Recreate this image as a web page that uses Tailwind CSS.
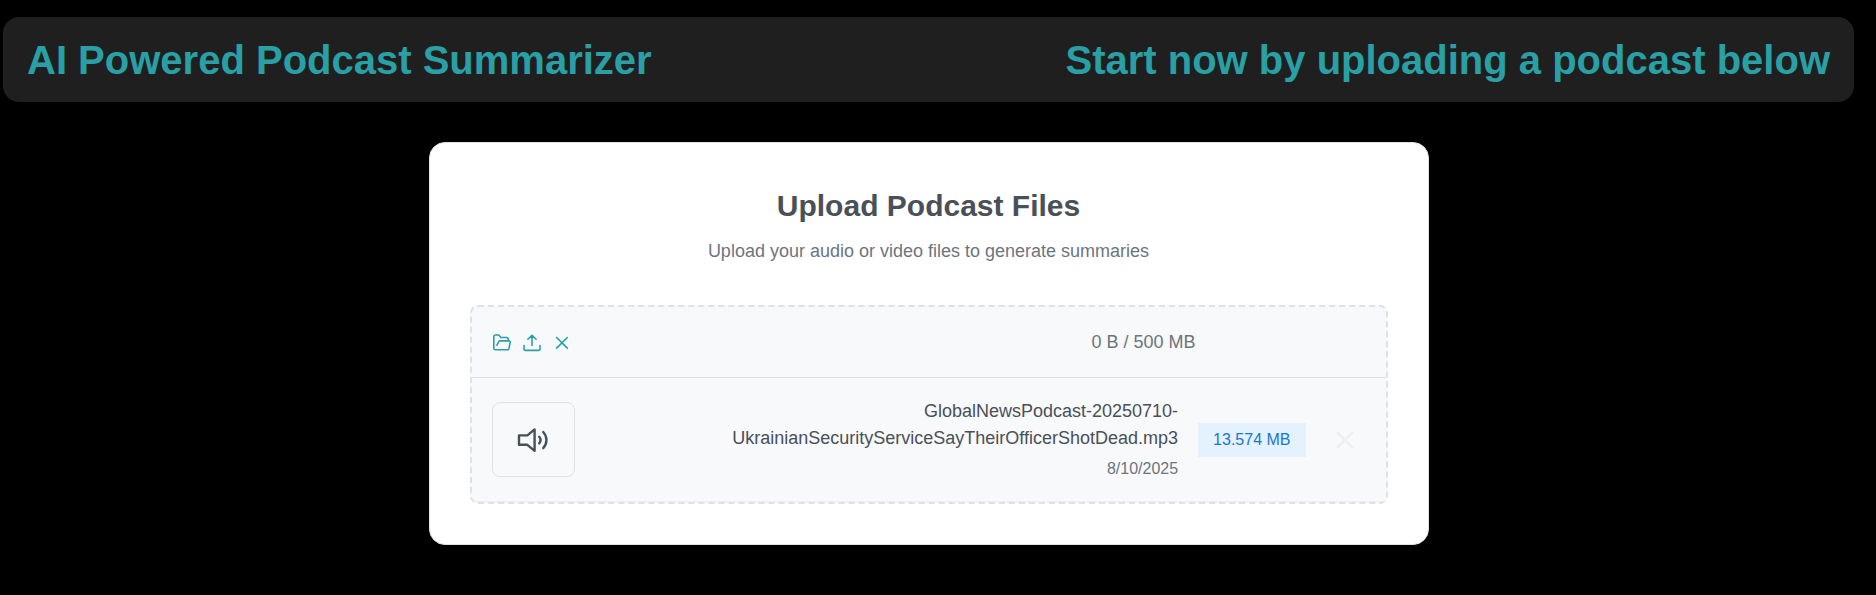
<!DOCTYPE html>
<html lang="en">
<head>
<meta charset="utf-8">
<meta name="viewport" content="width=device-width, initial-scale=1">
<title>AI Powered Podcast Summarizer</title>
<script src="https://cdn.jsdelivr.net/npm/@tailwindcss/browser@4"></script>
</head>
<body class="min-h-screen bg-black pt-[17px] pr-[22px] pb-8 pl-[3px] font-['Liberation_Sans',Arial,sans-serif] text-lg leading-[27px] text-[#495057]">
<header class="flex items-center justify-between rounded-2xl bg-[#1f1f1f] px-6 pt-[21px] pb-[19px] text-[40px] leading-[45px] font-bold text-[#28a0a5]">
  <h1>AI Powered Podcast Summarizer</h1>
  <p>Start now by uploading a podcast below</p>
</header>
<main class="mx-auto mt-10 max-w-[1000px] rounded-2xl border border-[#dee2e6] bg-white p-10">
  <div class="text-center">
    <h2 class="pt-1 text-[30px] leading-[37px] font-bold">Upload Podcast Files</h2>
    <p class="mt-[14px] text-[#6c757d]">Upload your audio or video files to generate summaries</p>
  </div>
  <section class="mt-10 rounded-lg border-2 border-dashed border-[#dee2e6] bg-[#f8f9fb]" aria-label="Files">
    <div class="flex items-center justify-between border-b border-[#dee2e6] pt-[22px] pb-[21px] pl-[21px] pr-[190px]">
      <div class="flex items-center gap-3 text-[#28a0a5]">
        <button type="button" aria-label="Choose files">
          <svg class="size-[18px]" viewBox="0 0 18 18" fill="none" stroke="currentColor" stroke-width="1.6" stroke-linejoin="round" stroke-linecap="round"><path d="M2.4 15.8h12.3a1.2 1.2 0 0 0 1.2-.9l1.3-6.6a1.2 1.2 0 0 0-1.2-1.4H6.9a1.2 1.2 0 0 0-1.1.7l-1.9 3.6M2.4 15.8A1.6 1.6 0 0 1 .8 14.2V2.6A1.6 1.6 0 0 1 2.4 1h3.3l2.3 2.5h5.7a1.5 1.5 0 0 1 1.5 1.5v1.8"/></svg>
        </button>
        <button type="button" aria-label="Upload">
          <svg class="size-[18px]" viewBox="0 0 18 18" fill="none" stroke="currentColor" stroke-width="1.6" stroke-linejoin="round" stroke-linecap="round"><path d="M9 11.4V1.4M4.9 5.2L9 1.2l4.1 4M1 11.6v3.3a1.5 1.5 0 0 0 1.5 1.5h13a1.5 1.5 0 0 0 1.5-1.5v-3.3"/></svg>
        </button>
        <button type="button" aria-label="Cancel">
          <svg class="size-[18px]" viewBox="0 0 18 18" fill="none" stroke="currentColor" stroke-width="1.6" stroke-linecap="round"><path d="M3.7 3.5l10.6 10.6M14.3 3.5L3.7 14.1"/></svg>
        </button>
      </div>
      <span class="text-[#6c757d]">0 B / 500 MB</span>
    </div>
    <div class="flex items-center border-b border-[#eceef1] py-5 pr-[31px] pl-5">
      <div class="flex h-[75px] w-[83px] shrink-0 items-center justify-center rounded-lg border border-[#dee2e6]">
        <svg class="size-8" viewBox="0 0 32 32" fill="none" stroke="currentColor" stroke-width="2.4" stroke-linejoin="round" stroke-linecap="round" role="img" aria-label="Audio file"><path d="M17.6 5.4v21.4l-7.2-6H2V11.4h8.4zM22.2 12.8c1.7 2 1.7 4.6 0 6.6M26.2 8c4.3 4.4 4.3 11.8 0 16.2"/></svg>
      </div>
      <div class="ml-auto w-[480px] text-right">
        <p class="break-words">GlobalNewsPodcast-20250710-UkrainianSecurityServiceSayTheirOfficerShotDead.mp3</p>
        <p class="mt-[5px] text-base leading-6 text-[#6c757d]">8/10/2025</p>
      </div>
      <span class="ml-5 bg-[#e3f2fd] px-[15px] py-[5px] text-base leading-6 text-[#1976d2]">13.574 MB</span>
      <button type="button" class="ml-[29px] text-[#eeeeee]" aria-label="Remove file">
        <svg class="size-5" viewBox="0 0 20 20" fill="none" stroke="currentColor" stroke-width="2" stroke-linecap="round"><path d="M2.5 2.5l15 15M17.5 2.5l-15 15"/></svg>
      </button>
    </div>
  </section>
</main>
</body>
</html>
